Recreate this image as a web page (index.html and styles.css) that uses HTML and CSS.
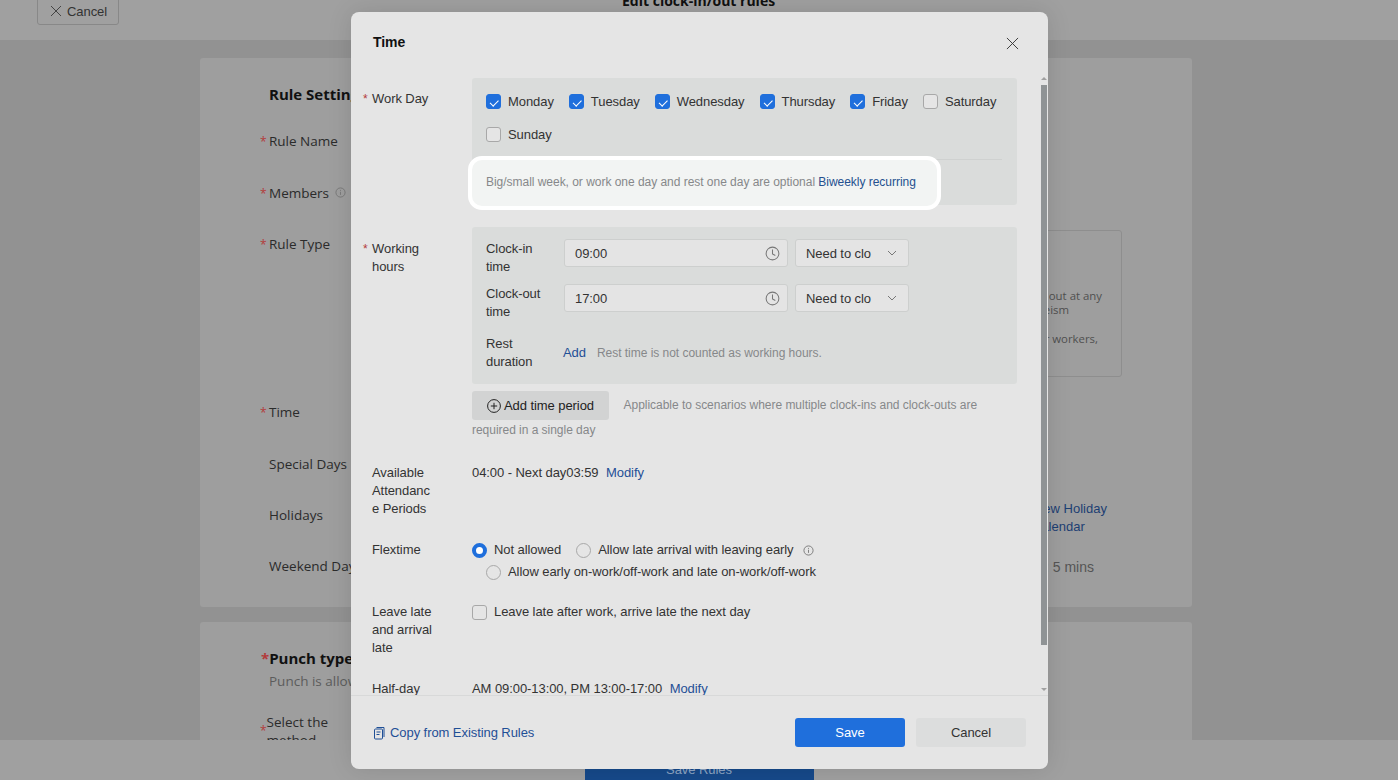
FILE: index.html
```html
<!DOCTYPE html>
<html lang="en">
<head>
  <meta charset="UTF-8">
  <title>Edit clock-in/out rules</title>
  <link rel="stylesheet" href="styles.css">
</head>
<body>
  <div class="page">
    <!-- Page behind the dialog -->
    <header class="top-bar">
      <button class="back-btn">
        <svg width="12" height="12" viewBox="0 0 12 12"><path d="M1 1l10 10M11 1L1 11" stroke="#444" fill="none"/></svg>
        Cancel
      </button>
      <div class="page-title">Edit clock-in/out rules</div>
    </header>

    <main class="page-main">
      <section class="card rule-card">
        <h2 class="card-title">Rule Settings</h2>
        <div class="rule-row"><div class="rule-label req">Rule Name</div></div>
        <div class="rule-row">
          <div class="rule-label req">Members
            <svg class="info" width="11" height="11" viewBox="0 0 12 12"><circle cx="6" cy="6" r="5" fill="none" stroke="#777"/><path d="M6 5.2v3.4M6 3.2v1" stroke="#777" fill="none"/></svg>
          </div>
        </div>
        <div class="rule-row rule-row-tall">
          <div class="rule-label req">Rule Type</div>
          <div class="type-box">
            <span class="type-line type-line-a">Employees can clock in and out at any</span>
            <span class="type-line type-line-b">time, without lateness or absenteeism</span>
            <span class="type-line type-gap type-line-c">Suitable for flexible-hour workers,</span>
          </div>
        </div>
        <div class="rule-row"><div class="rule-label req">Time</div></div>
        <div class="rule-row"><div class="rule-label">Special Days</div></div>
        <div class="rule-row">
          <div class="rule-label">Holidays</div>
          <a class="holiday-link">View Holiday Calendar</a>
        </div>
        <div class="rule-row">
          <div class="rule-label">Weekend Days</div>
          <div class="weekend-note">Tolerance: 5 mins</div>
        </div>
      </section>

      <section class="card punch-card">
        <h2 class="punch-title">Punch type</h2>
        <div class="punch-note">Punch is allowed</div>
        <div class="rule-label req punch-label">Select the method</div>
      </section>
    </main>

    <footer class="bottom-bar">
      <button class="save-rules">Save Rules</button>
    </footer>
  </div>

  <!-- Time dialog -->
  <div class="modal">
    <div class="modal-head">
      <h3>Time</h3>
      <svg class="modal-close" width="13" height="13" viewBox="0 0 14 14"><path d="M1 1l12 12M13 1L1 13" stroke="#333" stroke-width="1" fill="none"/></svg>
    </div>

    <div class="modal-body">
      <div class="row">
        <div class="row-label req work-label">Work Day</div>
        <div class="row-content">
          <div class="panel work-panel">
            <div class="day-list">
              <label class="choice"><span class="box on"></span>Monday</label>
              <label class="choice"><span class="box on"></span>Tuesday</label>
              <label class="choice"><span class="box on"></span>Wednesday</label>
              <label class="choice"><span class="box on"></span>Thursday</label>
              <label class="choice"><span class="box on"></span>Friday</label>
              <label class="choice"><span class="box"></span>Saturday</label>
              <label class="choice"><span class="box"></span>Sunday</label>
            </div>
            <div class="divider"></div>
            <div class="spotlight">Big/small week, or work one day and rest one day are optional <a class="link">Biweekly recurring</a></div>
          </div>
        </div>
      </div>

      <div class="row row-tight">
        <div class="row-label req hours-label">Working hours</div>
        <div class="row-content">
          <div class="panel hours-panel">
            <div class="time-row">
              <div class="time-label">Clock-in time</div>
              <div class="time-input"><span class="time-value">09:00</span>
                <svg width="15" height="15" viewBox="0 0 16 16"><circle cx="8" cy="8" r="6.8" fill="none" stroke="#777" stroke-width="1.1"/><path d="M8 3.8V8.4l3 1.8" fill="none" stroke="#777" stroke-width="1.1"/></svg>
              </div>
              <div class="time-select"><span class="time-value">Need to clo</span>
                <svg width="10" height="6" viewBox="0 0 10 6"><path d="M1 1l4 4 4-4" fill="none" stroke="#777"/></svg>
              </div>
            </div>
            <div class="time-row">
              <div class="time-label">Clock-out time</div>
              <div class="time-input"><span class="time-value">17:00</span>
                <svg width="15" height="15" viewBox="0 0 16 16"><circle cx="8" cy="8" r="6.8" fill="none" stroke="#777" stroke-width="1.1"/><path d="M8 3.8V8.4l3 1.8" fill="none" stroke="#777" stroke-width="1.1"/></svg>
              </div>
              <div class="time-select"><span class="time-value">Need to clo</span>
                <svg width="10" height="6" viewBox="0 0 10 6"><path d="M1 1l4 4 4-4" fill="none" stroke="#777"/></svg>
              </div>
            </div>
            <div class="rest-row">
              <div class="time-label">Rest duration</div>
              <a class="link rest-add">Add</a>
              <span class="muted">Rest time is not counted as working hours.</span>
            </div>
          </div>
          <div class="period-line">
            <button class="period-btn">
              <svg width="14" height="14" viewBox="0 0 14 14"><circle cx="7" cy="7" r="6.4" fill="none" stroke="#222"/><path d="M7 3.8v6.4M3.8 7h6.4" stroke="#222" fill="none"/></svg>
              Add time period
            </button>
            <span class="muted">Applicable to scenarios where multiple clock-ins and clock-outs are required in a single day</span>
          </div>
        </div>
      </div>

      <div class="row row-wide">
        <div class="row-label break-label">Available Attendance Periods</div>
        <div class="row-content">04:00 - Next day03:59 <a class="link modify">Modify</a></div>
      </div>

      <div class="row">
        <div class="row-label">Flextime</div>
        <div class="row-content">
          <div class="radio-line">
            <label class="choice"><span class="radio on"></span>Not allowed</label>
            <label class="choice"><span class="radio"></span>Allow late arrival with leaving early
              <svg class="info" width="11" height="11" viewBox="0 0 12 12"><circle cx="6" cy="6" r="5" fill="none" stroke="#777"/><path d="M6 5.2v3.4M6 3.2v1" stroke="#777" fill="none"/></svg>
            </label>
          </div>
          <div class="radio-line radio-line-second">
            <label class="choice"><span class="radio"></span>Allow early on-work/off-work and late on-work/off-work</label>
          </div>
        </div>
      </div>

      <div class="row row-tight">
        <div class="row-label">Leave late and arrival late</div>
        <div class="row-content">
          <label class="choice"><span class="box"></span>Leave late after work, arrive late the next day</label>
        </div>
      </div>

      <div class="row">
        <div class="row-label">Half-day</div>
        <div class="row-content">AM 09:00-13:00, PM 13:00-17:00 <a class="link modify">Modify</a></div>
      </div>
    </div>

    <div class="modal-foot">
      <a class="link copy-link">
        <svg width="13" height="14" viewBox="0 0 13 14"><path d="M3.5 1.5h7.5v9.5" fill="none" stroke="#1f4f96"/><rect x="1.5" y="3" width="8" height="10" rx="1" fill="none" stroke="#1f4f96"/><path d="M3.5 6h4M3.5 8.5h3" stroke="#1f4f96" fill="none"/></svg>
        Copy from Existing Rules
      </a>
      <div class="foot-actions">
        <button class="btn btn-save">Save</button>
        <button class="btn btn-cancel">Cancel</button>
      </div>
    </div>

    <div class="scroll-up"></div>
    <div class="scroll-thumb"></div>
    <div class="scroll-down"></div>
  </div>
</body>
</html>
```

FILE: styles.css
```css
* {
  box-sizing: border-box;
}
body {
  margin: 0;
  height: 780px;
  overflow: hidden;
  background-color: #929292;
  font-family: "Liberation Sans", Arial, sans-serif;
  font-size: 13px;
  line-height: 18px;
  letter-spacing: -0.07px;
  color: #333;
}
button {
  font-family: inherit;
  letter-spacing: inherit;
}
h2, h3 {
  margin: 0;
}

/* page behind the dialog */
.page {
  display: grid;
  grid-template-rows: 40px 700px 40px;
  height: 780px;
}
.top-bar {
  display: grid;
  grid-template-columns: 585px auto;
  grid-template-rows: 25px;
  align-items: end;
  padding-left: 37px;
  background: #a0a0a0;
  overflow: hidden;
}
.back-btn {
  display: flex;
  align-items: center;
  gap: 5px;
  width: 82px;
  height: 28px;
  padding: 0 0 0 12px;
  background: #a0a0a0;
  border: 1px solid #888;
  border-radius: 3px;
  font-size: 13px;
  color: #333;
}
.page-title {
  margin-bottom: 15px;
  font-family: "Open Sans", sans-serif;
  font-size: 14px;
  font-weight: bold;
  letter-spacing: 0;
  color: #111;
}
.page-main {
  overflow: hidden;
  padding-top: 18px;
}
.card {
  width: 992px;
  margin-left: 200px;
  padding-left: 69px;
  padding-right: 70px;
  background: #9e9e9e;
  border-radius: 3px;
  font-family: "Open Sans", sans-serif;
  font-size: 13.5px;
  letter-spacing: 0;
  color: #2b2b2b;
}
.rule-card {
  height: 549px;
  padding-top: 26px;
}
.card-title {
  height: 20px;
  margin-bottom: 27.4px;
  font-size: 15px;
  line-height: 20px;
  color: #111;
}
.rule-row {
  display: flex;
  justify-content: space-between;
  height: 51.3px;
}
.rule-row-tall {
  height: 168.5px;
}
.rule-label {
  line-height: 20px;
}
.req::before {
  content: "*";
  display: inline-block;
  width: 9px;
  margin-left: -9px;
  font-size: 12px;
  color: #b33a3a;
}
.type-box {
  width: 680px;
  height: 147px;
  margin-top: -4px;
  padding-top: 58px;
  border: 1px solid #8e8e8e;
  border-radius: 3px;
  font-size: 11.4px;
  line-height: 14.5px;
  color: #505050;
}
.type-line {
  display: block;
  text-align: right;
  white-space: nowrap;
}
.type-gap {
  margin-top: 14.5px;
}
.type-line-a {
  padding-right: 19px;
}
.type-line-b {
  padding-right: 52px;
}
.type-line-c {
  padding-right: 23px;
}
.holiday-link {
  width: 90px;
  margin-top: -5px;
  font-family: "Liberation Sans", Arial, sans-serif;
  font-size: 13px;
  line-height: 18px;
  color: #1d3f73;
}
.weekend-note {
  margin-top: 1px;
  padding-right: 28px;
  font-family: "Liberation Sans", Arial, sans-serif;
  font-size: 14px;
  line-height: 20px;
  color: #555;
}
.punch-card {
  height: 200px;
  margin-top: 15px;
  padding-top: 26px;
}
.punch-title {
  font-size: 15px;
  line-height: 20px;
  color: #111;
}
.punch-title::before {
  content: "*";
  margin-left: -8px;
  color: #b33a3a;
}
.punch-note {
  line-height: 20px;
  color: #5c5c5c;
  margin-top: 3px;
}
.punch-label {
  display: flex;
  align-items: center;
  width: 80px;
  margin-top: 22px;
  line-height: 18px;
}
.bottom-bar {
  display: flex;
  justify-content: center;
  background: #a0a0a0;
  overflow: hidden;
  padding-top: 11px;
}
.save-rules {
  width: 229px;
  height: 36px;
  background: #16498a;
  border: none;
  border-radius: 3px;
  font-size: 13px;
  color: #8ea6c4;
}

/* dialog */
.modal {
  position: absolute;
  left: 351px;
  top: 12px;
  display: flex;
  flex-direction: column;
  width: 697px;
  height: 757px;
  background: #e5e5e5;
  border-radius: 8px;
  box-shadow: 0 0 24px rgba(0, 0, 0, 0.12);
}
.modal-head {
  display: flex;
  justify-content: space-between;
  align-items: center;
  height: 66px;
  padding: 0 29px 6px 22px;
  flex-shrink: 0;
}
.modal-head h3 {
  font-size: 14px;
  color: #111;
}
.modal-close {
  margin-top: 3px;
}
.modal-body {
  flex: 1;
  overflow: hidden;
  padding-left: 21px;
  padding-right: 31px;
}
.row {
  display: flex;
  gap: 35px;
  margin-top: 23px;
}
.row:first-child {
  margin-top: 0;
}
.row-tight {
  margin-top: 22px;
}
.row-wide {
  margin-top: 24px;
}
.row-label {
  width: 65px;
  flex-shrink: 0;
}
.row-content {
  flex: 1;
}
.break-label {
  overflow-wrap: anywhere;
}
.work-label {
  margin-top: 12px;
}
.hours-label {
  margin-top: 13px;
}
.panel {
  background: #dadcdb;
  border-radius: 3px;
  padding-left: 14px;
  padding-right: 15px;
}
.work-panel {
  height: 127px;
  padding-top: 7px;
}
.day-list {
  display: flex;
  flex-wrap: wrap;
  column-gap: 15px;
}
.day-list .choice {
  height: 33px;
}
.choice {
  display: inline-flex;
  align-items: center;
  gap: 7px;
}
.box, .radio {
  display: inline-block;
  position: relative;
  width: 15px;
  height: 15px;
  background: #e5e5e5;
  border: 1px solid #a8a8a8;
  border-radius: 3px;
  flex-shrink: 0;
}
.radio {
  border-radius: 50%;
}
.box.on {
  background: #1f6fdc;
  border-color: #1f6fdc;
}
.box.on::after {
  content: "";
  position: absolute;
  left: 5px;
  top: 2.5px;
  width: 3.5px;
  height: 6.5px;
  border: solid #fff;
  border-width: 0 1.3px 1.3px 0;
  transform: rotate(45deg);
}
.radio.on {
  background: #fff;
  border: 4.5px solid #1f6fdc;
}
.divider {
  height: 1px;
  margin-top: 8px;
  background: #cfd1d0;
}
.spotlight {
  position: relative;
  z-index: 1;
  display: inline-block;
  margin-top: 13px;
  font-size: 12px;
  letter-spacing: -0.03px;
  color: #86888a;
}
.spotlight::before {
  content: "";
  position: absolute;
  z-index: -1;
  left: -18px;
  right: -25px;
  top: -17px;
  bottom: -19px;
  background: #f2f4f3;
  border: 4px solid #fff;
  border-radius: 14px;
}
.link {
  color: #1f4f96;
}
.spotlight .link {
  color: #24508f;
}
.muted {
  font-size: 12px;
  letter-spacing: -0.03px;
  color: #86888a;
}
.hours-panel {
  height: 157px;
  padding-top: 12px;
}
.time-row {
  display: flex;
  margin-bottom: 8px;
}
.time-label {
  width: 60px;
  margin-right: 18px;
  padding-top: 1px;
}
.time-value {
  padding-top: 2px;
}
.time-input, .time-select {
  display: flex;
  justify-content: space-between;
  align-items: center;
  height: 28px;
  background: #e4e4e4;
  border: 1px solid #cdcfce;
  border-radius: 3px;
}
.time-input {
  width: 224px;
  padding: 0 7px 0 10px;
}
.time-select {
  width: 114px;
  margin-left: 7px;
  padding: 0 11px 0 10px;
}
.rest-row {
  display: flex;
  align-items: center;
  margin-top: 13px;
}
.rest-add {
  margin-left: -1px;
  margin-right: 11px;
}
.period-line {
  margin-top: 7px;
  line-height: 19px;
}
.period-btn {
  display: inline-flex;
  align-items: center;
  justify-content: center;
  gap: 3px;
  width: 137px;
  height: 29px;
  margin-right: 11px;
  background: #d2d3d3;
  border: none;
  border-radius: 3px;
  font-size: 13px;
  color: #222;
  vertical-align: middle;
}
.modify {
  margin-left: 4px;
}
.radio-line {
  display: flex;
  gap: 15px;
}
.radio-line-second {
  margin-top: 4px;
  margin-left: 14px;
}
.info {
  margin-left: 2px;
}
.modal-foot {
  display: flex;
  justify-content: space-between;
  align-items: center;
  height: 74px;
  padding: 0 22px;
  border-top: 1px solid #d8d9d9;
  flex-shrink: 0;
}
.copy-link {
  display: flex;
  align-items: center;
  gap: 4px;
}
.foot-actions {
  display: flex;
  gap: 11px;
}
.btn {
  width: 110px;
  height: 29px;
  border: none;
  border-radius: 3px;
  font-size: 13px;
}
.btn-save {
  background: #1f6fdc;
  color: #fff;
}
.btn-cancel {
  background: #dcdddd;
  color: #333;
}

/* dialog scrollbar */
.scroll-thumb {
  position: absolute;
  left: 690px;
  top: 73px;
  width: 6px;
  height: 560px;
  background: #8f9395;
}
.scroll-up, .scroll-down {
  position: absolute;
  left: 690px;
  width: 0;
  height: 0;
  border-left: 3px solid transparent;
  border-right: 3px solid transparent;
}
.scroll-up {
  top: 65px;
  border-bottom: 3px solid #a0a0a0;
}
.scroll-down {
  top: 676px;
  border-top: 3px solid #a0a0a0;
}
```
